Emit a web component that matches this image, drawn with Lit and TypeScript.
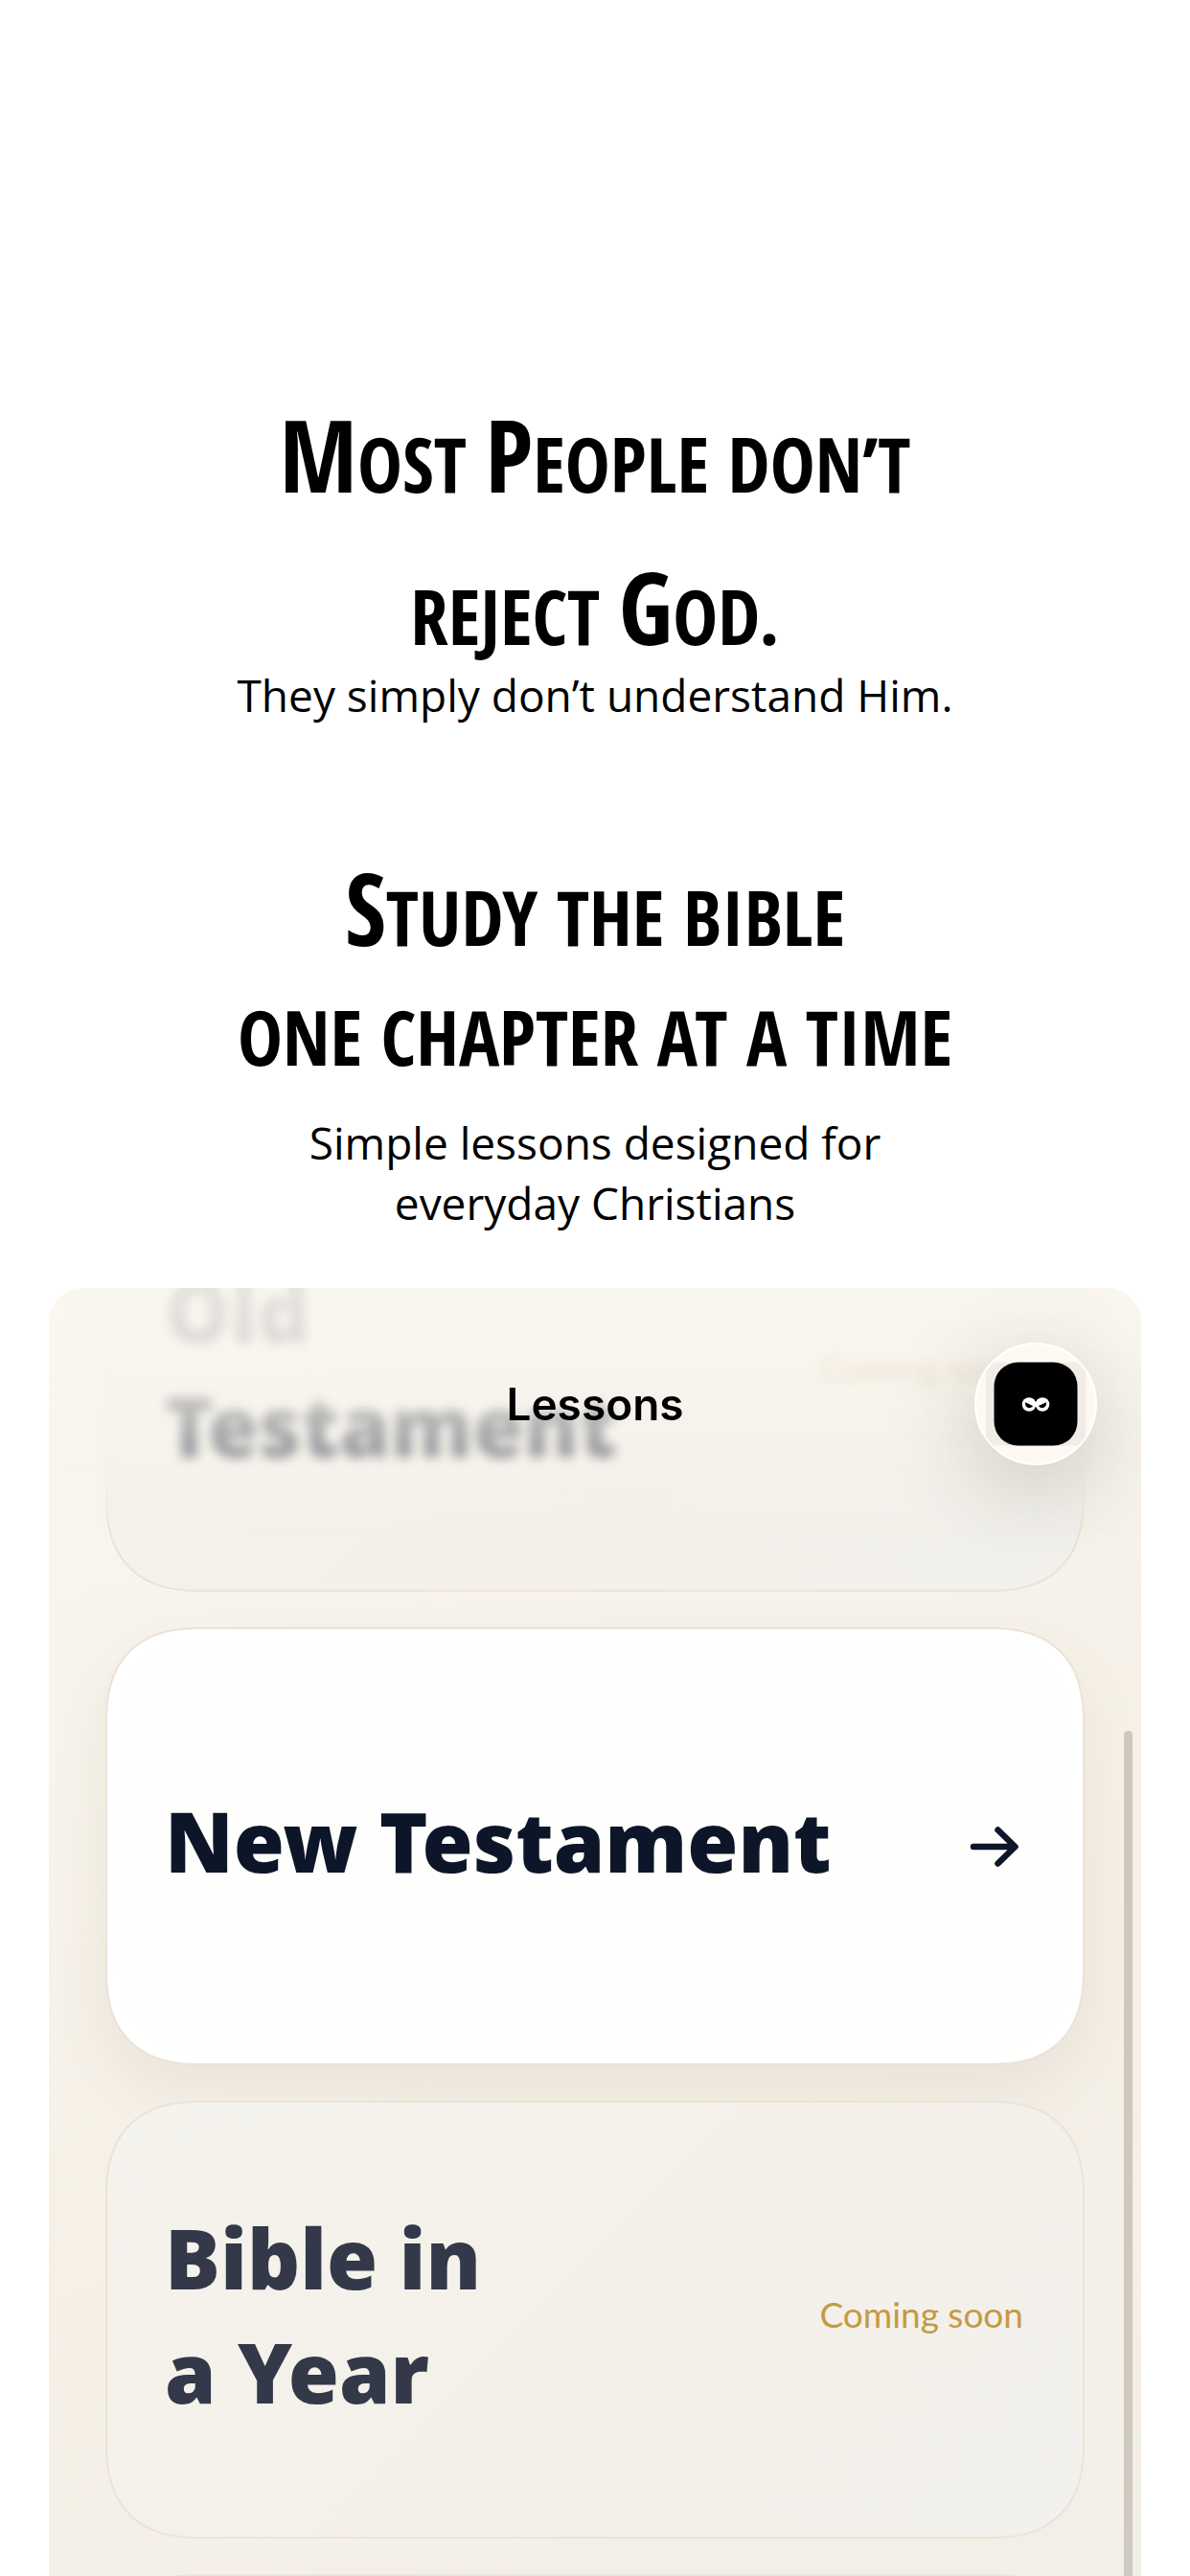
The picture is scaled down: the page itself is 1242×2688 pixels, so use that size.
import { LitElement, html, css, nothing } from "lit";
import { customElement, property } from "lit/decorators.js";

interface Lesson {
  title: string[];
  available: boolean;
}

const LESSONS: Lesson[] = [
  { title: ["Old", "Testament"], available: false },
  { title: ["New Testament"], available: true },
  { title: ["Bible in", "a Year"], available: false },
  { title: [], available: false },
];

/** Display heading: capitals drawn taller than the remaining letters. */
@customElement("display-heading")
class DisplayHeading extends LitElement {
  @property({ attribute: false }) lines: string[] = [];

  static styles = css`
    :host {
      display: block;
    }
    h2 {
      margin: 0;
      font-family: "Open Sans Condensed", "Roboto Condensed", sans-serif;
      font-weight: 700;
      font-size: 79px;
      line-height: inherit;
      text-transform: uppercase;
    }
    .line {
      display: block;
    }
    .cap {
      font-size: 104px;
      line-height: 1;
    }
  `;

  render() {
    return html`<h2>
      ${this.lines.map(
        (line) =>
          html`<span class="line"
            >${line
              .split(/([A-Z])/)
              .filter((part) => part)
              .map((part) => (/^[A-Z]$/.test(part) ? html`<span class="cap">${part}</span>` : part))}</span
          >`,
      )}
    </h2>`;
  }
}

@customElement("lesson-card")
class LessonCard extends LitElement {
  @property({ attribute: false }) lesson: Lesson = { title: [], available: false };

  static styles = css`
    :host {
      display: block;
    }
    .card {
      box-sizing: border-box;
      width: 100%;
      min-height: 457px;
      display: flex;
      align-items: center;
      justify-content: space-between;
      gap: 32px;
      padding: 0 62px 0 60px;
      border: 2px solid #ebe3d9;
      border-radius: 84px;
      background: linear-gradient(135deg, #f5f3ed, #f4f0e9 60%, #f2f1ed);
      color: #333949;
      font: inherit;
      text-align: left;
    }
    @supports (corner-shape: superellipse(1.3)) {
      .card {
        border-radius: 100px;
        corner-shape: superellipse(1.3);
      }
    }
    .open {
      background: #fefefc;
      color: #0d1628;
      box-shadow:
        inset 0 0 24px 12px #ffffff,
        0 24px 64px rgba(80, 60, 30, 0.08);
      cursor: pointer;
    }
    .title {
      padding-bottom: 12px;
      font-family: "Noto Sans", "Open Sans", sans-serif;
      font-weight: 900;
      font-size: 86px;
      line-height: 119px;
    }
    .title span {
      display: block;
    }
    .soon {
      padding-bottom: 12px;
      font-family: Lato, sans-serif;
      font-size: 37px;
      line-height: 48px;
      color: #c49a45;
      white-space: nowrap;
    }
    .arrow {
      width: 52px;
      height: 44px;
      margin-right: 4px;
      flex: none;
    }
  `;

  render() {
    const { title, available } = this.lesson;
    const heading = html`<span class="title">${title.map((line) => html`<span>${line}</span>`)}</span>`;
    if (available) {
      return html`<button class="card open" type="button">
        ${heading}
        <svg class="arrow" viewBox="0 0 52 44" aria-hidden="true">
          <path
            d="M4 22H47M29.500 4.500L47.500 22L29.500 39.500"
            fill="none"
            stroke="#0d1628"
            stroke-width="6.500"
            stroke-linecap="round"
            stroke-linejoin="round"
          />
        </svg>
      </button>`;
    }
    return html`<article class="card">
      ${heading} ${title.length ? html`<span class="soon">Coming soon</span>` : nothing}
    </article>`;
  }
}

@customElement("app-root")
class AppRoot extends LitElement {
  static styles = css`
    :host {
      display: flex;
      flex-direction: column;
      box-sizing: border-box;
      height: 100vh;
      overflow: hidden;
      padding: 404px 51px 0;
      background: #ffffff;
      color: #000000;
      font-family: "Open Sans", "Noto Sans", sans-serif;
    }
    .intro {
      flex: none;
      text-align: center;
    }
    .wide {
      line-height: 159px;
      margin-bottom: -28px;
    }
    .tight {
      line-height: 125px;
      margin-top: 137px;
    }
    .lead {
      margin: 0;
      font-size: 46px;
      line-height: 63px;
    }
    .lead span {
      display: block;
    }
    .gap {
      margin-top: 17px;
    }
    .panel {
      position: relative;
      flex: 1;
      min-height: 0;
      margin-top: 57px;
      overflow: hidden;
      border-radius: 36px 36px 0 0;
      background: linear-gradient(160deg, #fbf8f1 0%, #f8f4ec 25%, #f6f0e6 60%, #f2efe8 100%);
    }
    .list {
      display: flex;
      flex-direction: column;
      gap: 37px;
      margin-top: -140px;
      padding: 0 59px;
    }
    .veil,
    .fade {
      position: absolute;
      inset: 0 0 auto;
    }
    .veil {
      height: 260px;
      backdrop-filter: blur(6px);
      mask-image: linear-gradient(#000 180px, transparent);
    }
    .fade {
      height: 260px;
      background: linear-gradient(
        rgba(249, 246, 239, 0.9),
        rgba(249, 246, 239, 0.85) 60px,
        rgba(248, 245, 238, 0.75) 110px,
        rgba(247, 244, 237, 0.5) 178px,
        rgba(247, 244, 237, 0)
      );
    }
    .bar {
      position: absolute;
      inset: 0 0 auto;
      display: grid;
      grid-template-columns: 1fr auto 1fr;
      align-items: center;
      padding: 57px 46px 0;
    }
    .bar h1 {
      grid-column: 2;
      margin: 0;
      font-family: Inter, sans-serif;
      font-weight: 600;
      font-size: 46px;
      line-height: 56px;
    }
    .avatar {
      justify-self: end;
      width: 128px;
      height: 128px;
      box-sizing: border-box;
      padding: 0;
      border: 2px solid #ffffff;
      border-radius: 50%;
      background: #fefaf3;
      box-shadow: 0 24px 96px rgba(40, 35, 25, 0.22);
      overflow: hidden;
      cursor: pointer;
    }
    .avatar svg {
      display: block;
      width: 100%;
      height: 100%;
    }
    .thumb {
      position: absolute;
      top: 462px;
      right: 9px;
      bottom: -20px;
      width: 9px;
      border-radius: 5px;
      background: #cec8bf;
    }
  `;

  render() {
    return html`
      <header class="intro">
        <display-heading class="wide" .lines=${["Most People don’t", "reject God."]}></display-heading>
        <p class="lead">They simply don’t understand Him.</p>
        <display-heading class="tight" .lines=${["Study the bible", "one chapter at a time"]}></display-heading>
        <p class="lead gap"><span>Simple lessons designed for</span><span>everyday Christians</span></p>
      </header>
      <main class="panel">
        <div class="list">${LESSONS.map((lesson) => html`<lesson-card .lesson=${lesson}></lesson-card>`)}</div>
        <div class="veil"></div>
        <div class="fade"></div>
        <div class="bar">
          <h1>Lessons</h1>
          <button class="avatar" type="button" aria-label="Profile">
            <svg viewBox="0 0 124 124" aria-hidden="true">
              <rect x="10" y="18.500" width="104" height="87" fill="#f1ede6" />
              <rect x="18.500" y="18.500" width="87" height="87" rx="25" fill="#000" />
              <circle cx="55" cy="62.500" r="7.300" fill="#fff" />
              <circle cx="69" cy="62.500" r="7.300" fill="#fff" />
              <path d="M51 60.300L59 64C57.500 67.200 50.500 67.500 51 60.300Z" fill="#000" />
              <path d="M73 60.300L65 64C66.500 67.200 73.500 67.500 73 60.300Z" fill="#000" />
            </svg>
          </button>
        </div>
        <div class="thumb"></div>
      </main>
    `;
  }
}
